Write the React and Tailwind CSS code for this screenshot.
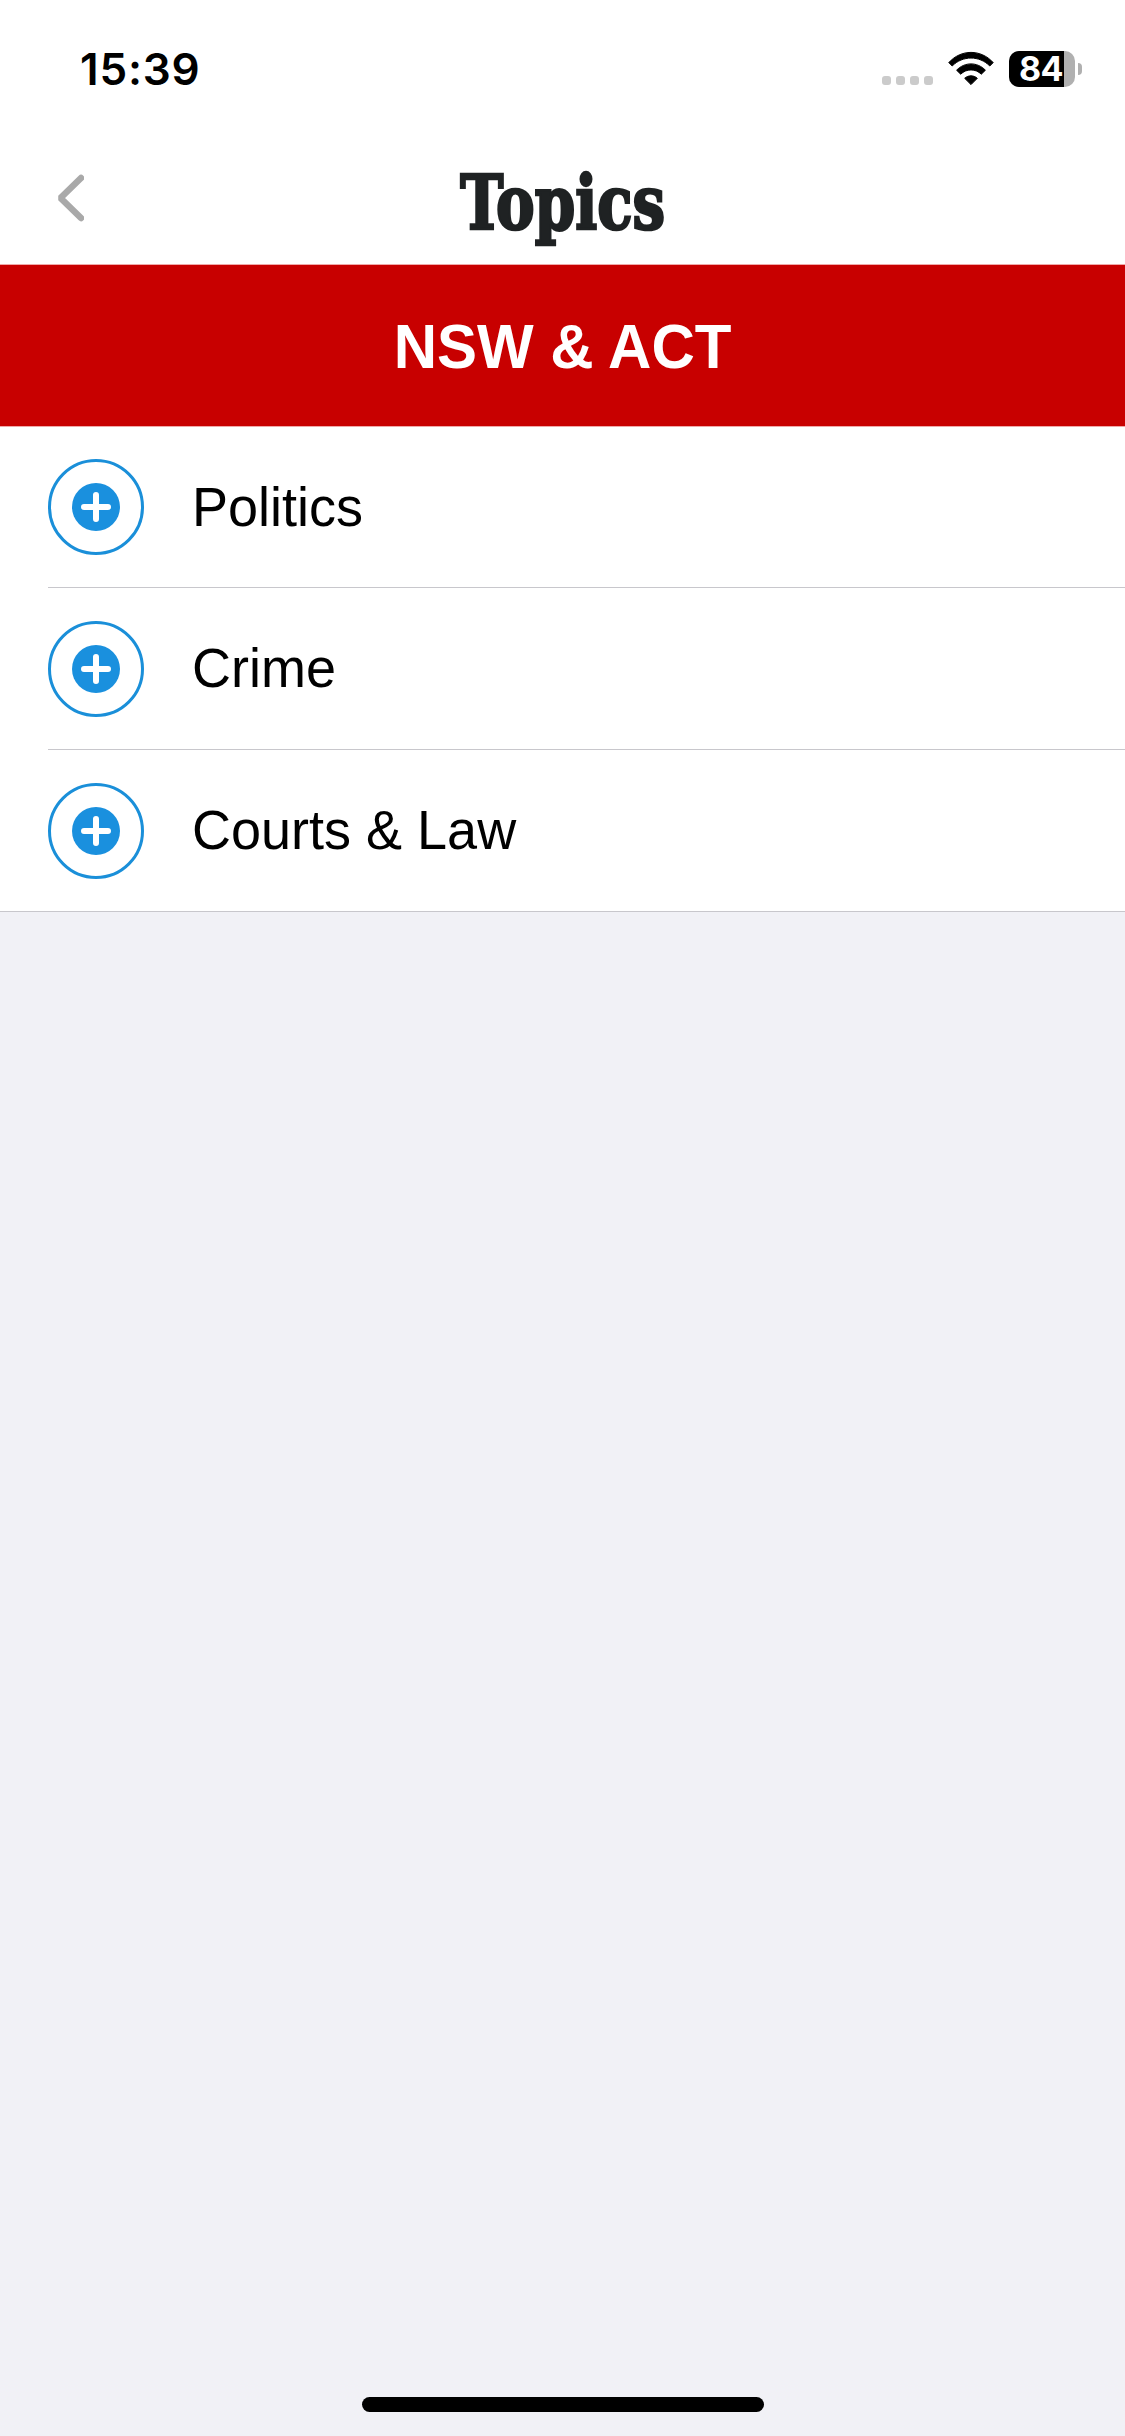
import React from "react";

const topics = ["Politics", "Crime", "Courts & Law"];

const StatusBar = () => (
  <div className="flex h-[138px] items-center justify-between pl-[80px] pr-[43px]">
    <span className="font-['Inter',sans-serif] text-[44px] font-semibold leading-none tracking-[0.8px]">
      15:39
    </span>
    <div className="flex h-9 items-center">
      <div className="flex gap-[5px] pt-[23px]">
        {[0, 1, 2, 3].map((dot) => (
          <span key={dot} className="h-[9px] w-[9px] rounded-[3px] bg-[#cbcbcb]" />
        ))}
      </div>
      {/* Wifi */}
      <svg className="ml-[15px]" width="46" height="36" viewBox="0 0 46 36">
        <path d="M0.8 11.6C13 -2 33 -2 45.2 11.6L41.8 15C31.3 4.4 14.7 4.4 4.2 15Z" stroke="#000" strokeWidth="1" strokeLinejoin="round" />
        <path d="M8.6 19.2C16.6 10.8 29.4 10.8 37.4 19.2L33.3 23.2C27.6 17.5 18.4 17.5 12.7 23.2Z" stroke="#000" strokeWidth="1" strokeLinejoin="round" />
        <path d="M16.7 27.3C20.3 24 25.7 24 29.3 27.3L23 33.6Z" stroke="#000" strokeWidth="1" strokeLinejoin="round" />
      </svg>
      {/* Battery */}
      <div className="ml-[15px] flex items-center">
        <div className="flex h-9 w-[66px] rounded-[10px] bg-[#b0b0b0]">
          <div className="flex h-full w-[55px] items-center justify-end rounded-l-[10px] bg-black pr-px font-['Inter',sans-serif] text-[34px] font-bold leading-9 tracking-[-0.5px] text-white">
            84
          </div>
        </div>
        <div className="ml-[3px] h-3 w-1 rounded-r-full bg-[#b0b0b0]" />
      </div>
    </div>
  </div>
);

const Header = () => (
  <header className="grid h-[126px] grid-cols-3 items-center">
    <button className="pb-[6px] pl-[56px]">
      <svg width="28" height="48" viewBox="0 0 28 48" fill="none">
        <path d="M25 4L4.5 24L25 44" stroke="#a9a9a9" strokeWidth="6.5" strokeLinecap="round" strokeLinejoin="bevel" />
      </svg>
    </button>
    <h1 className="flex justify-center pt-1">
      <span className="scale-x-[0.87] font-['DejaVu_Serif_Condensed','DejaVu_Serif',serif] text-[74px] font-bold leading-none text-[#1f2223] [-webkit-text-stroke:2.5px_#1f2223]">
        Topics
      </span>
    </h1>
  </header>
);

const AddButton = () => (
  <button className="flex h-24 w-24 items-center justify-center rounded-full border-[3px] border-[#1a8fd9]">
    <svg width="48" height="48" viewBox="0 0 48 48">
      <circle cx="24" cy="24" r="24" fill="#1a90de" />
      <path d="M24 12V36M12 24H36" stroke="#fff" strokeWidth="6" strokeLinecap="round" />
    </svg>
  </button>
);

const App = () => {
  return (
    <div className="flex h-[2436px] w-[1125px] flex-col bg-[#f1f1f6] font-['Liberation_Sans',Arial,sans-serif] text-black">
      <div className="bg-white">
        <StatusBar />
        <Header />
      </div>

      {/* Section */}
      <div className="flex h-[163px] items-center justify-center border-y border-[#f0a8a8] bg-[#c80000]">
        <h2 className="scale-y-[1.04] pt-[3px] text-[60px] font-bold leading-none text-white">
          NSW &amp; ACT
        </h2>
      </div>

      {/* Topic list */}
      <ul className="border-b border-[#c8c7cc] bg-white">
        {topics.map((topic) => (
          <li
            key={topic}
            className="ml-12 flex h-[162px] items-center border-b border-[#c8c7cc] first:h-[161px] last:h-[161px] last:border-b-0"
          >
            <AddButton />
            <span className="ml-12 origin-left scale-y-[1.04] pb-[3px] text-[54px] leading-none">
              {topic}
            </span>
          </li>
        ))}
      </ul>

      {/* Home indicator */}
      <div className="mx-auto mb-6 mt-auto h-[15px] w-[402px] rounded-full bg-black" />
    </div>
  );
};

export default App;
